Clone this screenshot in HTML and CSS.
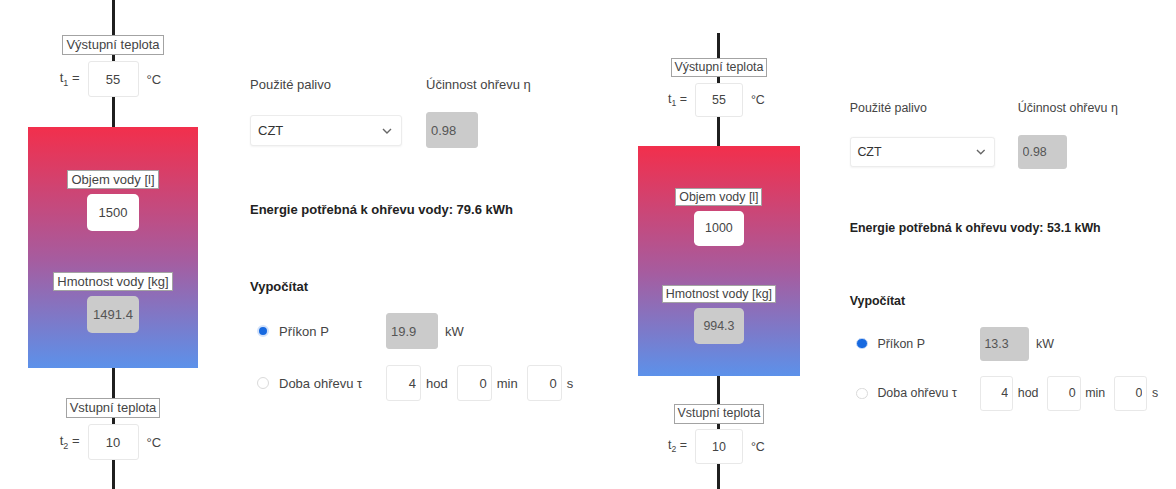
FILE: index.html
```html
<!DOCTYPE html>
<html>
<head>
<meta charset="utf-8">
<title>Ohřev vody</title>
<link rel="stylesheet" href="styles.css">
</head>
<body>
<div class="page">

  <section class="calc">
    <div class="diagram">
      <div class="pipe pipe-lead"></div>
      <div class="tag">Výstupní teplota</div>
      <div class="pipe pipe-gap"></div>
      <div class="temp">
        <span class="temp-sym">t<sub>1</sub> =</span>
        <input class="field field-temp" value="55">
        <span class="temp-unit">°C</span>
      </div>
      <div class="pipe pipe-mid"></div>
      <div class="tank">
        <div class="tag">Objem vody [l]</div>
        <input class="field field-tank" value="1500">
        <div class="tag tag-low">Hmotnost vody [kg]</div>
        <input class="field field-tank field-ro" value="1491.4" readonly>
      </div>
      <div class="pipe pipe-mid"></div>
      <div class="tag">Vstupní teplota</div>
      <div class="pipe pipe-gap"></div>
      <div class="temp">
        <span class="temp-sym">t<sub>2</sub> =</span>
        <input class="field field-temp" value="10">
        <span class="temp-unit">°C</span>
      </div>
      <div class="pipe pipe-tail"></div>
    </div>

    <div class="form">
      <div class="fuel">
        <span class="cap">Použité palivo</span>
        <span class="cap">Účinnost ohřevu η</span>
        <div class="select-wrap">
          <select class="select"><option>CZT</option></select>
          <svg class="chev" viewBox="0 0 10 6"><path d="M1 1l4 4 4-4" fill="none" stroke="#666" stroke-width="1.4"/></svg>
        </div>
        <input class="field field-eff field-ro" value="0.98" readonly>
      </div>
      <p class="energy">Energie potřebná k ohřevu vody: 79.6 kWh</p>
      <p class="heading">Vypočítat</p>
      <div class="opt">
        <label class="opt-label"><input class="radio" type="radio" name="calc-a" checked>Příkon P</label>
        <div class="opt-fields">
          <input class="field field-power field-ro" value="19.9" readonly><span class="unit">kW</span>
        </div>
      </div>
      <div class="opt opt-time">
        <label class="opt-label"><input class="radio" type="radio" name="calc-a">Doba ohřevu τ</label>
        <div class="opt-fields">
          <input class="field field-time" value="4"><span class="unit unit-time">hod</span>
          <input class="field field-time" value="0"><span class="unit unit-time">min</span>
          <input class="field field-time" value="0"><span class="unit unit-time">s</span>
        </div>
      </div>
    </div>
  </section>

  <section class="calc calc-b">
    <div class="diagram">
      <div class="pipe pipe-lead"></div>
      <div class="tag">Výstupní teplota</div>
      <div class="pipe pipe-gap"></div>
      <div class="temp">
        <span class="temp-sym">t<sub>1</sub> =</span>
        <input class="field field-temp" value="55">
        <span class="temp-unit">°C</span>
      </div>
      <div class="pipe pipe-mid"></div>
      <div class="tank">
        <div class="tag">Objem vody [l]</div>
        <input class="field field-tank" value="1000">
        <div class="tag tag-low">Hmotnost vody [kg]</div>
        <input class="field field-tank field-ro" value="994.3" readonly>
      </div>
      <div class="pipe pipe-mid"></div>
      <div class="tag">Vstupní teplota</div>
      <div class="pipe pipe-gap"></div>
      <div class="temp">
        <span class="temp-sym">t<sub>2</sub> =</span>
        <input class="field field-temp" value="10">
        <span class="temp-unit">°C</span>
      </div>
      <div class="pipe pipe-tail"></div>
    </div>

    <div class="form">
      <div class="fuel">
        <span class="cap">Použité palivo</span>
        <span class="cap">Účinnost ohřevu η</span>
        <div class="select-wrap">
          <select class="select"><option>CZT</option></select>
          <svg class="chev" viewBox="0 0 10 6"><path d="M1 1l4 4 4-4" fill="none" stroke="#666" stroke-width="1.4"/></svg>
        </div>
        <input class="field field-eff field-ro" value="0.98" readonly>
      </div>
      <p class="energy">Energie potřebná k ohřevu vody: 53.1 kWh</p>
      <p class="heading">Vypočítat</p>
      <div class="opt">
        <label class="opt-label"><input class="radio" type="radio" name="calc-b" checked>Příkon P</label>
        <div class="opt-fields">
          <input class="field field-power field-ro" value="13.3" readonly><span class="unit">kW</span>
        </div>
      </div>
      <div class="opt opt-time">
        <label class="opt-label"><input class="radio" type="radio" name="calc-b">Doba ohřevu τ</label>
        <div class="opt-fields">
          <input class="field field-time" value="4"><span class="unit unit-time">hod</span>
          <input class="field field-time" value="0"><span class="unit unit-time">min</span>
          <input class="field field-time" value="0"><span class="unit unit-time">s</span>
        </div>
      </div>
    </div>
  </section>

</div>
</body>
</html>
```

FILE: styles.css
```css
body {
	margin: 0;
	background: #fff;
	font-family: "Liberation Sans", Arial, sans-serif;
	font-size: 13px;
	color: #444;
}
.page {
	display: flex;
	height: 489px;
	overflow: hidden;
}
.calc {
	display: flex;
	flex: none;
	width: 611px;
	height: 489px;
}
/* second screenshot is a little smaller */
.calc-b {
	zoom: 0.955;
	width: 592px;
	height: 512px;
}
.calc-b .diagram { padding-top: 34.5px; }
.calc-b .pipe-lead { height: 26px; }
.calc-b .tag:first-of-type { margin-top: 1px; }
.calc-b .form { padding-top: 106px; }

/* diagram */
.diagram {
	display: flex;
	flex-direction: column;
	align-items: center;
	width: 170px;
	margin-left: 28px;
}
.pipe {
	flex: none;
	width: 3px;
	background: #1f1f1f;
}
.pipe-lead { height: 35px; }
.pipe-gap { height: 6px; }
.pipe-mid { height: 30px; }
.pipe-tail { flex: 1; }
.tag {
	background: #fff;
	border: 1px solid #a3a3a3;
	padding: 0 3px;
	line-height: 18px;
	white-space: nowrap;
	color: #444;
}
.temp {
	display: grid;
	grid-template-columns: 1fr 51px 1fr;
	column-gap: 8px;
	align-items: center;
	width: 100%;
}
.temp-sym { justify-self: end; }
.temp sub { font-size: 9px; }
.tank {
	display: flex;
	flex-direction: column;
	align-items: center;
	box-sizing: border-box;
	width: 170px;
	height: 241px;
	padding-top: 43px;
	background: linear-gradient(#f22f4c, #a65c9f 55%, #5c91ea);
}
.tank .tag { line-height: 17px; }
.tag-low { margin-top: 41px; }

/* inputs */
.field {
	box-sizing: border-box;
	font: inherit;
	color: #444;
	background: #fff;
	border: 1px solid #e8e8e8;
	border-radius: 3px;
	outline: none;
	padding: 0;
}
.field-ro {
	background: #cbcbcb;
	border-color: #cbcbcb;
	color: #555;
}
.field-temp {
	width: 51px;
	height: 36px;
	text-align: center;
}
.field-tank {
	width: 52px;
	height: 37px;
	margin-top: 5px;
	border: none;
	border-radius: 5px;
	text-align: center;
}
.field-eff, .field-power {
	width: 52px;
	height: 36px;
	padding-left: 4px;
}
.field-time {
	width: 35px;
	height: 36px;
	padding-right: 4px;
	text-align: right;
}

/* form */
.form {
	margin-left: 52px;
	padding-top: 77px;
}
.fuel {
	display: grid;
	grid-template-columns: 152px 52px;
	column-gap: 24px;
	row-gap: 19px;
	align-items: center;
}
.cap {
	line-height: 16px;
	white-space: nowrap;
}
.select-wrap {
	position: relative;
	width: 152px;
	height: 31px;
}
.select {
	appearance: none;
	box-sizing: border-box;
	width: 100%;
	height: 100%;
	padding-left: 7px;
	font: inherit;
	color: #333;
	background: #fff;
	border: 1px solid #ececec;
	border-radius: 3px;
	box-shadow: 0 1px 2px rgba(0, 0, 0, 0.05);
}
.chev {
	position: absolute;
	right: 10px;
	top: 13px;
	width: 10px;
	height: 6px;
	pointer-events: none;
}
.energy, .heading {
	line-height: 16px;
	font-weight: bold;
	color: #222;
}
.energy { margin: 54px 0 0; }
.heading { margin: 61px 0 0; }
.opt {
	display: flex;
	align-items: center;
	margin-top: 18px;
}
.opt-time { margin-top: 16px; }
.opt-label {
	display: flex;
	align-items: center;
	width: 136px;
}
.radio {
	appearance: none;
	box-sizing: border-box;
	width: 12px;
	height: 12px;
	margin: 0 10px 0 7px;
	border: 1px solid #dadada;
	border-radius: 50%;
	background: #fff;
}
.radio:checked {
	border: 2px solid #d3e2fa;
	background: #1769e0;
}
.opt-fields {
	display: flex;
	align-items: center;
}
.unit { margin-left: 7px; }
.unit-time { margin: 0 9px 0 5px; }
```
